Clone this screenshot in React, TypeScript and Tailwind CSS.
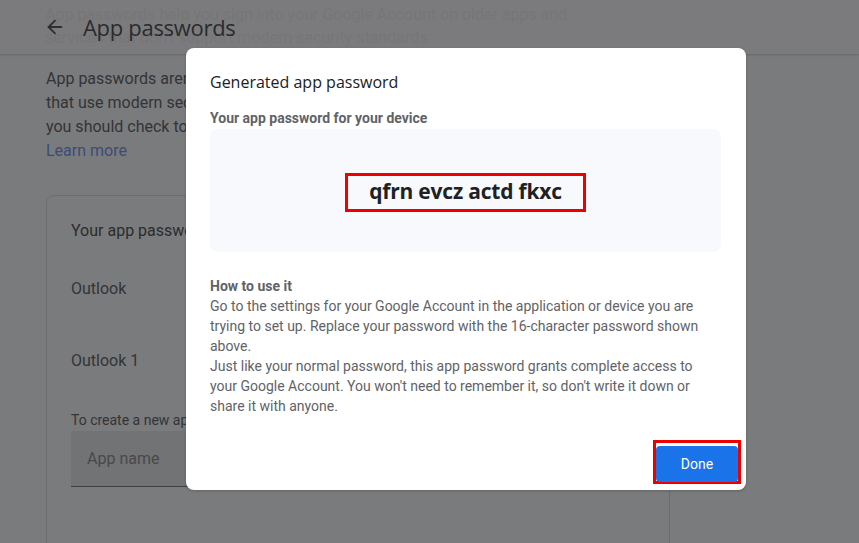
import { ArrowLeft } from 'lucide-react'

// Google Account "App passwords" page, dimmed behind the generated-password dialog.

const SANS = "font-['Roboto','Liberation_Sans',sans-serif]"
const DISPLAY = "font-['Open_Sans','Noto_Sans',sans-serif]"

function Header() {
  return (
    <div className="relative h-[54px] flex items-center shadow-[0_1px_2px_rgba(0,0,0,0.16)] bg-[#7b7b7d] z-10">
      {/* text of the page scrolled underneath the header */}
      <div className={`absolute left-[45px] top-[3px] text-[16px] leading-[23px] text-[#767678] whitespace-nowrap ${SANS}`}>
        <div>App passwords help you sign into your Google Account on older apps and</div>
        <div>services that don't support modern security standards.</div>
      </div>
      <ArrowLeft className="relative ml-[44px] w-[22px] h-[22px] text-[#2e2f31]" strokeWidth={2} />
      <h1 className={`relative ml-[17px] text-[22px] tracking-[-0.3px] text-[#2a2b2d] ${DISPLAY}`}>App passwords</h1>
    </div>
  )
}

function Page() {
  return (
    <div className={`px-[46px] ${SANS}`}>
      <div className="pt-[13px] text-[16px] leading-[24px] text-[#333436] whitespace-nowrap">
        <div>App passwords aren't recommended and are unnecessary in most cases. For apps</div>
        <div>that use modern security standards, use "Sign in with Google" instead. But first</div>
        <div>you should check to see if the app supports it.</div>
        <div className="text-[#3b4c78]">Learn more</div>
      </div>

      <div className="mt-[32px] w-[624px] h-[400px] border border-[#6d6e70] rounded-[8px] px-[24px] pt-[23px]">
        <div className="text-[16px] text-[#2b2c2e]">Your app passwords</div>
        <div className="mt-[34px] text-[16px] text-[#333436]">Outlook</div>
        <div className="mt-[48px] text-[16px] text-[#333436]">Outlook 1</div>
        <div className="mt-[37px] text-[14px] text-[#333436]">To create a new app specific password, type a name for it below...</div>
        <div className="w-[380px] h-[56px] bg-[#727375] border-b border-[#3e3f41] flex items-center px-[16px]">
          <span className="text-[16px] text-[#48494b]">App name</span>
        </div>
      </div>
    </div>
  )
}

function PasswordDialog() {
  return (
    <div className={`absolute z-20 left-[186px] top-[48px] w-[560px] h-[442px] bg-white rounded-[8px] shadow-[0_1px_3px_rgba(0,0,0,0.2)] px-[24px] pt-[23px] flex flex-col ${SANS}`}>
      <div className={`text-[16px] leading-[22px] text-[#202124] ${DISPLAY}`}>Generated app password</div>
      <div className="mt-[15px] text-[14px] leading-[20px] font-bold text-[#5f6368]">Your app password for your device</div>
      <div className="mt-[1px] w-[511px] h-[123px] bg-[#f8f9fc] rounded-[8px] flex items-center justify-center">
        <div className="mt-[3px] border-[3px] border-[#ee0000] px-[21px] h-[39px] flex items-center">
          <span className={`text-[21px] font-bold tracking-[-0.2px] text-[#202124] ${DISPLAY}`}>qfrn evcz actd fkxc</span>
        </div>
      </div>
      <div className="mt-[24px] text-[14px] leading-[20px] text-[#5f6368] w-[512px]">
        <div className="font-bold">How to use it</div>
        <div>
          Go to the settings for your Google Account in the application or device you are trying to set up. Replace your password with the 16-character password shown above.
        </div>
        <div>
          Just like your normal password, this app password grants complete access to your Google Account. You won't need to remember it, so don't write it down or share it with anyone.
        </div>
      </div>
      <div className="mt-auto mb-[6px] mr-[-19px] self-end w-[88px] h-[44px] border-[3px] border-[#ee0000] pt-[3px]">
        <button className="w-[82px] h-[36px] rounded-[4px] bg-[#1a73e8] text-white text-[14px]">Done</button>
      </div>
    </div>
  )
}

export default function App() {
  return (
    <div className="relative w-[859px] h-[543px] overflow-hidden bg-[#7a7b7d]">
      <Header />
      <Page />
      <PasswordDialog />
    </div>
  )
}
